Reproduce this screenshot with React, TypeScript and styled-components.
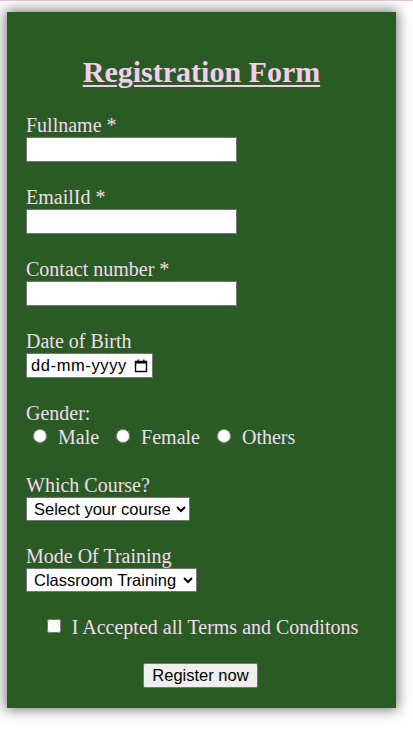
import { FC } from 'react';
import styled, { createGlobalStyle } from 'styled-components';

const GlobalStyle = createGlobalStyle`
    html, body {
        margin: 0;
        padding: 0;
        background: #ffffff;
    }
    body {
        border-top: 1px solid #d9c6d2;
        font-family: "Liberation Serif", "Times New Roman", serif;
    }
`;

const Card = styled.form`
    width: 389px;
    box-sizing: border-box;
    margin: 11px 0 24px 7px;
    padding: 42px 19px 20px;
    background: #2a5b25;
    box-shadow: 0 0 12px 2px rgba(0, 0, 0, 0.5);
    color: #f3dcef;
`;

const Title = styled.h2`
    margin: 0 0 24px;
    font-size: 30px;
    line-height: 35px;
    font-weight: bold;
    text-align: center;
    text-decoration: underline;
    text-decoration-thickness: 2px;
    text-underline-offset: 3px;
    color: #f6cdef;
`;

const Field = styled.div`
    margin-bottom: 23px;
`;

const Label = styled.label`
    display: block;
    font-size: 20px;
    line-height: 23px;
    padding-top: 1px;
`;

const TextInput = styled.input`
    display: block;
    box-sizing: border-box;
    width: 211px;
    height: 25px;
    margin: 0;
    padding: 1px 3px;
    border: 1px solid #767676;
    background: #fff;
    font-family: "Liberation Sans", Arial, sans-serif;
    font-size: 16.5px;
    outline: none;
`;

const DateBox = styled.div`
    display: flex;
    align-items: center;
    box-sizing: border-box;
    width: 127px;
    height: 25px;
    padding: 0 4px;
    border: 1px solid #767676;
    background: #fff;
`;

const DateText = styled.input`
    width: 100px;
    border: 0;
    padding: 0;
    margin: 0;
    outline: none;
    font-family: "Liberation Sans", Arial, sans-serif;
    font-size: 16.5px;
    letter-spacing: 0.6px;
    color: #000;
    &::placeholder {
        color: #000;
    }
`;

const CalendarIcon = styled.svg`
    margin-left: auto;
    flex: none;
`;

const RadioRow = styled.div`
    display: flex;
    align-items: center;
    height: 25px;
    padding-left: 7px;
    gap: 17px;
    font-size: 20px;
`;

const Option = styled.label`
    display: flex;
    align-items: center;
    line-height: 23px;
`;

const Radio = styled.input`
    width: 14px;
    height: 14px;
    margin: 0 11px 3px 0;
`;

const Select = styled.select<{ $width: number }>`
    display: block;
    box-sizing: border-box;
    width: ${p => p.$width}px;
    height: 24px;
    margin: 0;
    padding: 0 1px 0 3px;
    border: 1px solid #767676;
    border-radius: 0;
    background: #fff;
    color: #000;
    font-family: "Liberation Sans", Arial, sans-serif;
    font-size: 16.5px;
`;

const Terms = styled.label`
    display: flex;
    justify-content: center;
    align-items: center;
    margin: 24px 0 24px 2px;
    font-size: 20px;
    line-height: 23px;
`;

const Check = styled.input`
    width: 14px;
    height: 14px;
    margin: 0 11px 3px 0;
`;

const Actions = styled.div`
    display: flex;
    justify-content: center;
    padding-right: 2px;
`;

const Button = styled.button`
    box-sizing: border-box;
    height: 25px;
    padding: 1px 8px;
    border: 1px solid #767676;
    border-radius: 2px;
    background: #efefef;
    color: #000;
    font-family: "Liberation Sans", Arial, sans-serif;
    font-size: 16.5px;
    line-height: 19px;
`;

export default function App() {
    return (
        <>
            <GlobalStyle />
            <Card onSubmit={e => e.preventDefault()}>
                <Title>Registration Form</Title>

                <Field>
                    <Label htmlFor="fullname">Fullname *</Label>
                    <TextInput id="fullname" type="text" />
                </Field>

                <Field>
                    <Label htmlFor="email">EmailId *</Label>
                    <TextInput id="email" type="email" />
                </Field>

                <Field>
                    <Label htmlFor="contact">Contact number *</Label>
                    <TextInput id="contact" type="tel" />
                </Field>

                <Field>
                    <Label htmlFor="dob">Date of Birth</Label>
                    <DateBox>
                        <DateText id="dob" type="text" placeholder="dd-mm-yyyy" />
                        <CalendarIcon width="14" height="14" viewBox="0 0 14 14">
                            <rect x="1.5" y="2.5" width="11" height="10" fill="none" stroke="#000" strokeWidth="1.4" />
                            <rect x="1" y="2" width="12" height="2.5" fill="#000" />
                            <rect x="3.5" y="0.5" width="1.4" height="2.5" fill="#000" />
                            <rect x="9.1" y="0.5" width="1.4" height="2.5" fill="#000" />
                        </CalendarIcon>
                    </DateBox>
                </Field>

                <Field>
                    <Label as="div">Gender:</Label>
                    <RadioRow>
                        <Option><Radio type="radio" name="gender" value="male" />Male</Option>
                        <Option><Radio type="radio" name="gender" value="female" />Female</Option>
                        <Option><Radio type="radio" name="gender" value="others" />Others</Option>
                    </RadioRow>
                </Field>

                <Field>
                    <Label htmlFor="course">Which Course?</Label>
                    <Select id="course" $width={164} defaultValue="">
                        <option value="">Select your course</option>
                        <option value="web">Web Development</option>
                        <option value="data">Data Science</option>
                    </Select>
                </Field>

                <Field>
                    <Label htmlFor="mode">Mode Of Training</Label>
                    <Select id="mode" $width={171} defaultValue="classroom">
                        <option value="classroom">Classroom Training</option>
                        <option value="online">Online Training</option>
                    </Select>
                </Field>

                <Terms>
                    <Check type="checkbox" />
                    I Accepted all Terms and Conditons
                </Terms>

                <Actions>
                    <Button type="submit">Register now</Button>
                </Actions>
            </Card>
        </>
    );
}
